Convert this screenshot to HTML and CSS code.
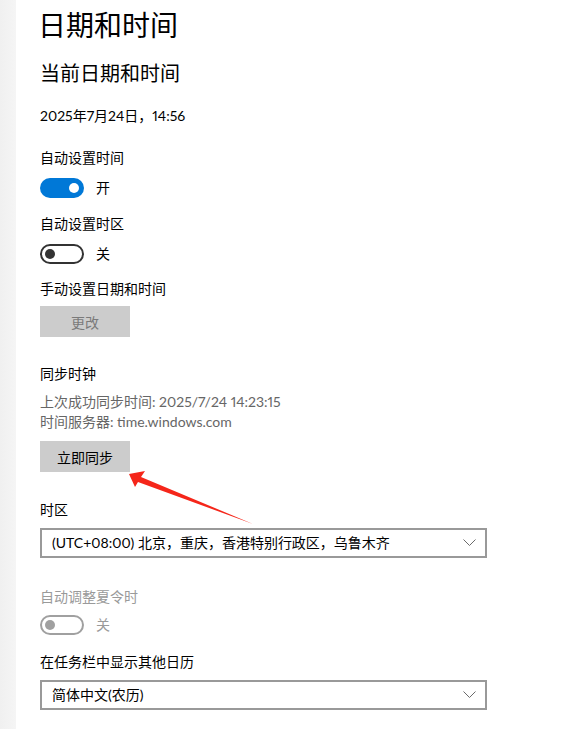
FILE: index.html
```html
<!DOCTYPE html>
<html lang="zh-CN">
<head>
<meta charset="utf-8">
<title>日期和时间</title>
<link rel="stylesheet" href="styles.css">
</head>
<body>
<div class="page">
  <div class="strip"></div>
  <main class="main">
    <h1 class="title">日期和时间</h1>
    <h2 class="subtitle">当前日期和时间</h2>
    <div class="text date">2025年7月24日，14:56</div>

    <div class="text label l1">自动设置时间</div>
    <div class="toggle-row">
      <span class="toggle on"><span class="knob"></span></span>
      <span class="text state">开</span>
    </div>

    <div class="text label l2">自动设置时区</div>
    <div class="toggle-row">
      <span class="toggle off"><span class="knob"></span></span>
      <span class="text state">关</span>
    </div>

    <div class="text label l3">手动设置日期和时间</div>
    <button class="btn disabled">更改</button>

    <div class="text label l4">同步时钟</div>
    <div class="text info first">上次成功同步时间: 2025/7/24 14:23:15</div>
    <div class="text info">时间服务器: time.windows.com</div>
    <button class="btn sync">立即同步</button>

    <div class="text label l5">时区</div>
    <div class="select">
      <span class="text">(UTC+08:00) 北京，重庆，香港特别行政区，乌鲁木齐</span>
      <svg class="chev" width="13" height="8" viewBox="0 0 13 8"><path d="M0.5 0.5 L6.5 6.5 L12.5 0.5" fill="none" stroke="#6a6a6a" stroke-width="1"/></svg>
    </div>

    <div class="text label l6 muted">自动调整夏令时</div>
    <div class="toggle-row">
      <span class="toggle dis"><span class="knob"></span></span>
      <span class="text state muted">关</span>
    </div>

    <div class="text label l7">在任务栏中显示其他日历</div>
    <div class="select">
      <span class="text">简体中文(农历)</span>
      <svg class="chev" width="13" height="8" viewBox="0 0 13 8"><path d="M0.5 0.5 L6.5 6.5 L12.5 0.5" fill="none" stroke="#6a6a6a" stroke-width="1"/></svg>
    </div>
  </main>
  <svg class="arrow" width="579" height="729" viewBox="0 0 579 729">
    <polygon points="129,474 145,471 141,477 253,524 138,482 135,487" fill="#f5261a"/>
  </svg>
</div>
</body>
</html>
```

FILE: styles.css
```css
html, body {
  margin: 0;
  padding: 0;
  background: #ffffff;
}
body {
  font-family: Lato, "Noto Sans CJK SC", sans-serif;
  font-variant-numeric: proportional-nums;
  color: #000;
}
.page {
  position: relative;
  display: flex;
  width: 579px;
  height: 729px;
  overflow: hidden;
}
.strip {
  width: 16px;
  flex: none;
  background: linear-gradient(to right, #f0f0f0, #f5f5f5);
}
.main {
  flex: 1;
  padding-left: 24px;
  display: flex;
  flex-direction: column;
  align-items: flex-start;
}
.title {
  margin: 4px 0 0 -2px;
  font-size: 28px;
  line-height: 40px;
  font-weight: 400;
  font-family: "Noto Sans CJK SC", sans-serif;
}
.subtitle {
  margin: 15px 0 0;
  font-size: 20px;
  line-height: 28px;
  font-weight: 400;
  font-family: "Noto Sans CJK SC", sans-serif;
}
.text {
  font-size: 14px;
  line-height: 20px;
}
.date { margin-top: 19px; }
.l1 { margin-top: 22px; }
.toggle-row {
  display: flex;
  align-items: center;
  margin-top: 10px;
  height: 20px;
}
.l2 { margin-top: 16px; }
.l3 { margin-top: 15px; }
.l4 { margin-top: 27px; }
.l5 { margin-top: 28px; }
.l6 { margin-top: 29px; }
.l7 { margin-top: 17px; }
.l6 + .toggle-row { margin-top: 8px; }
.toggle {
  box-sizing: border-box;
  width: 44px;
  height: 20px;
  border-radius: 10px;
  display: flex;
  align-items: center;
  flex: none;
}
.toggle .knob {
  width: 10px;
  height: 10px;
  border-radius: 50%;
}
.toggle.on {
  background: #0078d7;
  justify-content: flex-end;
  padding-right: 5px;
}
.toggle.on .knob { background: #fff; }
.toggle.off {
  border: 2px solid #333;
  padding-left: 3px;
}
.toggle.off .knob { background: #333; }
.toggle.dis {
  border: 2px solid #a0a0a0;
  padding-left: 3px;
}
.toggle.dis .knob { background: #a0a0a0; }
.state { margin-left: 12px; }
.muted { color: #9a9a9a; }
.btn {
  margin-top: 7px;
  width: 90px;
  height: 31px;
  border: none;
  background: #cccccc;
  font-family: "Noto Sans CJK SC", sans-serif;
  font-size: 14px;
  line-height: 20px;
  padding: 0;
  color: #000;
}
.btn.disabled { color: #7a7a7a; }
.info { color: #666; }
.info.first { margin-top: 8px; }
.btn.sync { margin-top: 9px; }
.select {
  box-sizing: border-box;
  margin-top: 8px;
  width: 447px;
  height: 30px;
  border: 2px solid #999;
  display: flex;
  align-items: center;
  justify-content: space-between;
  padding: 0 9px 0 10px;
}
.chev { flex: none; }
.arrow {
  position: absolute;
  left: 0;
  top: 0;
  pointer-events: none;
}
```
